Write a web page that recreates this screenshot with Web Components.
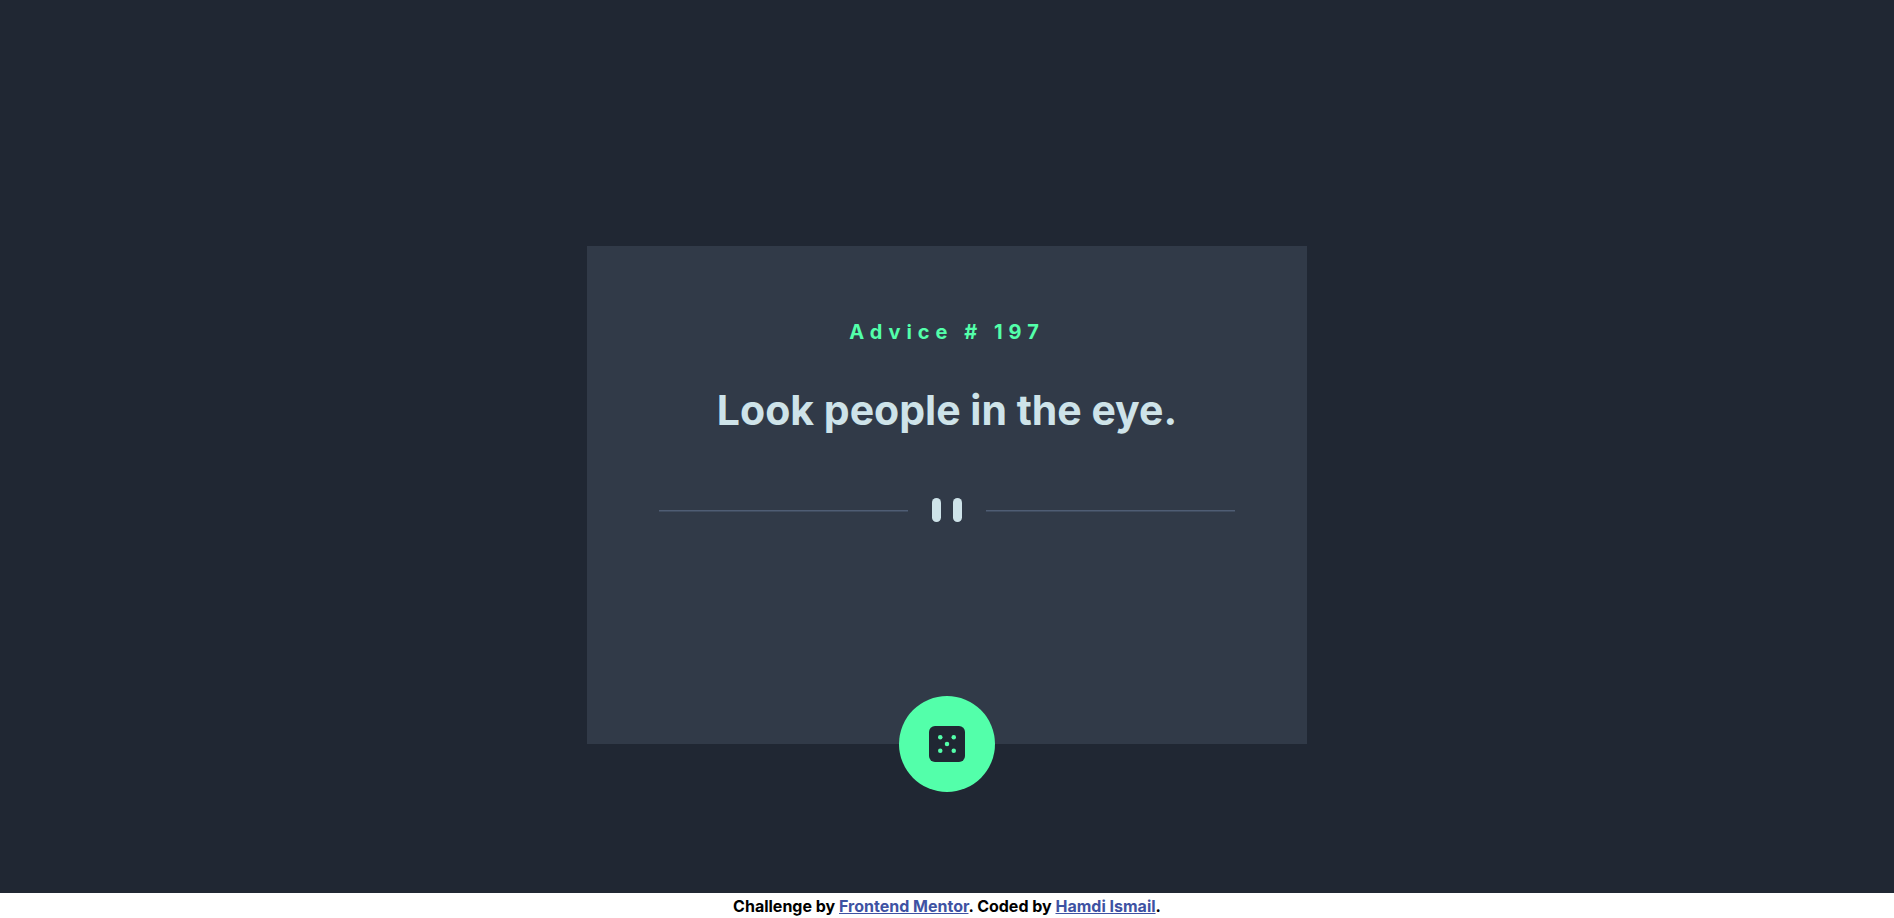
<!DOCTYPE html>
<html lang="en">
<head>
<meta charset="utf-8">
<meta name="viewport" content="width=device-width, initial-scale=1">
<title>Advice generator</title>
<style>
  body { margin: 0; background: #fff; font-family: Inter, "Open Sans", sans-serif; font-weight: 700; }
</style>
</head>
<body>
<advice-app></advice-app>
<script>
const define = (name, html) => {
  const template = document.createElement('template');
  template.innerHTML = html;
  customElements.define(name, class extends HTMLElement {
    constructor() {
      super();
      this.attachShadow({ mode: 'open' }).append(template.content.cloneNode(true));
    }
  });
};

define('quote-divider', `
  <style>
    :host { display: block; }
    svg { display: block; width: 100%; height: 24px; }
  </style>
  <svg viewBox="0 0 384 16" preserveAspectRatio="xMidYMid slice" aria-hidden="true">
    <path fill="#4f5d74" d="M0 8h166v1H0zM218 8h166v1H218z"/>
    <g fill="#cee3e9"><rect x="182" width="6" height="16" rx="3"/><rect x="196" width="6" height="16" rx="3"/></g>
  </svg>`);

define('dice-button', `
  <style>
    :host { display: block; }
    button { display: grid; place-items: center; width: 96px; height: 96px; padding: 0; border: 0; border-radius: 50%; background: #53ffaa; cursor: pointer; }
    button:hover { box-shadow: 0 0 32px #53ffaa; }
    svg { display: block; width: 36px; height: 36px; }
  </style>
  <button type="button" aria-label="New advice">
    <svg viewBox="0 0 24 24" aria-hidden="true">
      <rect width="24" height="24" rx="4" fill="#202733"/>
      <g fill="#53ffaa"><circle cx="7.5" cy="7.5" r="1.5"/><circle cx="16.5" cy="7.5" r="1.5"/><circle cx="12" cy="12" r="1.5"/><circle cx="7.5" cy="16.5" r="1.5"/><circle cx="16.5" cy="16.5" r="1.5"/></g>
    </svg>
  </button>`);

define('advice-card', `
  <style>
    :host { display: flex; flex-direction: column; position: relative; box-sizing: border-box; width: 720px; max-width: 100%; min-height: 498px; padding: 72px; background: #313a48; text-align: center; }
    h1 { margin: 0; font-size: 20px; line-height: 28px; letter-spacing: 6px; color: #53ffaa; }
    p { margin: 32px 0 56px; font-size: 41px; line-height: 64px; color: #cee3e9; }
    dice-button { position: absolute; bottom: -48px; left: 50%; transform: translateX(-50%); }
  </style>
  <h1><slot name="number"></slot></h1>
  <p><slot></slot></p>
  <quote-divider></quote-divider>
  <dice-button></dice-button>`);

define('page-footer', `
  <style>
    :host { display: block; padding-top: 2px; text-align: center; font-size: 16px; line-height: 23px; color: #000; }
    a { color: #3e52a3; }
  </style>
  <footer>Challenge by <a href="https://www.frontendmentor.io">Frontend Mentor</a>. Coded by <a href="#">Hamdi Ismail</a>.</footer>`);

define('advice-app', `
  <style>
    :host { display: flex; flex-direction: column; min-height: 100vh; }
    main { flex: 1; display: flex; align-items: center; justify-content: center; padding: 96px 16px 0; background: #202733; }
  </style>
  <main><advice-card><span slot="number">Advice # 197</span>Look people in the eye.</advice-card></main>
  <page-footer></page-footer>`);
</script>
</body>
</html>
